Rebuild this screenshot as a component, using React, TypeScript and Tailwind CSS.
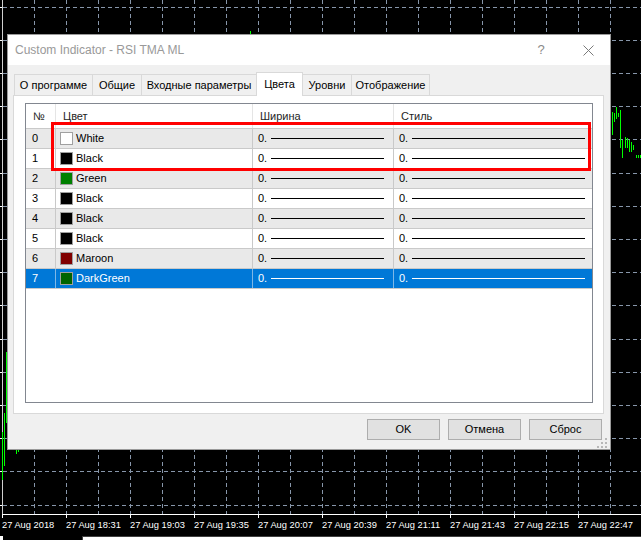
import React from 'react';

const font = "font-['Liberation_Sans',Arial,sans-serif]";

const hGrid = Array.from({ length: 16 }, (_, i) => Math.floor(7 + i * 33.2) + 0.5);
const vGrid = Array.from({ length: 19 }, (_, i) => 34.5 + i * 32);

const timeLabels = [
  '27 Aug 2018',
  '27 Aug 18:31',
  '27 Aug 19:03',
  '27 Aug 19:35',
  '27 Aug 20:07',
  '27 Aug 20:39',
  '27 Aug 21:11',
  '27 Aug 21:43',
  '27 Aug 22:15',
  '27 Aug 22:47',
];

// [x, yTop, yBottom]
const bars: [number, number, number][] = [
  [2.5, 432, 480],
  [4.5, 413, 466],
  [6.5, 352, 423],
  [16.5, 449, 454],
  [18.5, 448, 452],
  [250.5, 31, 34],
  [612.5, 112, 135],
  [614.5, 113, 122],
  [616.5, 107, 119],
  [618.5, 113, 117],
  [620.5, 110, 148],
  [622.5, 140, 158],
  [625.5, 137, 148],
  [627.5, 138, 148],
  [629.5, 140, 152],
  [631.5, 142, 152],
  [633.5, 145, 150],
  [636.5, 155, 158],
  [638.5, 155, 158],
  [640.5, 155, 158],
];

function Chart() {
  return (
    <svg width="641" height="540" className="absolute inset-0">
      {hGrid.map((y) => (
        <line key={'h' + y} x1={3} x2={641} y1={y} y2={y} stroke="#8796aa" strokeDasharray="4 3" />
      ))}
      {vGrid.map((x) => (
        <line key={'v' + x} x1={x} x2={x} y1={0} y2={514} stroke="#8796aa" strokeDasharray="4 3" />
      ))}
      {hGrid.map((y) => (
        <line key={'t' + y} x1={0} x2={3} y1={y} y2={y} stroke="#ffffff" />
      ))}
      <line x1={2.5} x2={2.5} y1={0} y2={515} stroke="#d0d0d0" />
      <line x1={2} x2={641} y1={514.5} y2={514.5} stroke="#ffffff" />
      {timeLabels.map((t, i) => (
        <g key={t}>
          <line x1={2.5 + i * 64} x2={2.5 + i * 64} y1={514} y2={518} stroke="#ffffff" />
          <text
            x={2 + i * 64}
            y={527.5}
            fill="#ffffff"
            fontSize="9.3"
            fontFamily="'Liberation Sans', Arial, sans-serif"
          >
            {t}
          </text>
        </g>
      ))}
      {bars.map(([x, a, b]) => (
        <line key={x} x1={x} x2={x} y1={a} y2={b} stroke="#00ff00" />
      ))}
      <rect x={0} y={536} width={3} height={4} fill="#ffffff" />
      <rect x={82.5} y={536.5} width={560} height={5} fill="#ffffff" stroke="#404040" />
    </svg>
  );
}

type Row = { n: number; name: string; color: string };

const rows: Row[] = [
  { n: 0, name: 'White', color: '#ffffff' },
  { n: 1, name: 'Black', color: '#000000' },
  { n: 2, name: 'Green', color: '#008000' },
  { n: 3, name: 'Black', color: '#000000' },
  { n: 4, name: 'Black', color: '#000000' },
  { n: 5, name: 'Black', color: '#000000' },
  { n: 6, name: 'Maroon', color: '#800000' },
  { n: 7, name: 'DarkGreen', color: '#006400' },
];

function ColorRow({ row, selected }: { row: Row; selected: boolean }) {
  const bg = selected ? 'bg-[#0078d7] text-white' : row.n % 2 === 0 ? 'bg-[#e9e9e9] text-black' : 'bg-white text-black';
  const sep = selected ? 'border-[#7fb7e6]' : 'border-[#c9c9c9]';
  const line = selected ? 'bg-white' : 'bg-black';
  return (
    <div className={`flex h-[20px] border-b border-[#c9c9c9] ${bg}`}>
      <div className={`w-[30px] border-r ${sep} pl-[6px] flex items-center`}>{row.n}</div>
      <div className={`w-[197px] border-r ${sep} pl-[4px] flex items-center`}>
        <span
          className="w-[13px] h-[13px] border border-[#a0a0a0] shrink-0"
          style={{ backgroundColor: row.color }}
        />
        <span className="ml-[3px]">{row.name}</span>
      </div>
      <div className={`w-[141px] border-r ${sep} pl-[5px] pr-[9px] flex items-center`}>
        <span>0.</span>
        <span className={`ml-[4px] flex-1 h-px ${line}`} />
      </div>
      <div className="flex-1 pl-[5px] pr-[7px] flex items-center">
        <span>0.</span>
        <span className={`ml-[4px] flex-1 h-px ${line}`} />
      </div>
    </div>
  );
}

function Tabs() {
  const base = 'h-[21px] mb-px border-t border-[#d9d9d9] flex items-center justify-center';
  return (
    <div className="flex items-end h-[24px] mt-[7px] -mb-px pl-[6px] relative z-10">
      <div className={`w-[78px] border-l ${base}`}>О программе</div>
      <div className={`w-[49px] border-l ${base}`}>Общие</div>
      <div className={`w-[115px] border-l ${base}`}>Входные параметры</div>
      <div className="w-[47px] h-[24px] bg-white border-t border-x border-[#d9d9d9] flex items-center justify-center">
        Цвета
      </div>
      <div className={`w-[48px] ${base}`}>Уровни</div>
      <div className={`w-[79px] border-x ${base}`}>Отображение</div>
    </div>
  );
}

function Dialog() {
  return (
    <div className="absolute left-[7px] top-[34px] w-[604px] h-[416px] border border-[#9a9a9a] bg-[#f0f0f0] flex flex-col text-[11px]">
      <div className="h-[30px] bg-white flex items-center shrink-0">
        <span className="pl-[7px] text-[12px] text-[#999999]">Custom Indicator - RSI TMA ML</span>
        <span className="ml-auto w-[50px] text-center text-[13px] text-[#8a8a8a]">?</span>
        <span className="w-[44px] flex justify-center">
          <svg width="11" height="11" viewBox="0 0 11 11">
            <path d="M0.5 0.5 L10.5 10.5 M10.5 0.5 L0.5 10.5" stroke="#7a7a7a" strokeWidth="1" />
          </svg>
        </span>
      </div>

      <Tabs />

      <div className="ml-[5px] w-[591px] h-[319px] bg-white border border-[#d9d9d9] shrink-0">
        <div className="ml-[11px] mt-[7px] w-[568px] h-[300px] border border-[#828790] bg-white flex flex-col">
          <div className="flex h-[25px] border-b border-[#c9c9c9] bg-white text-[#1e1e1e]">
            <div className="w-[30px] border-r border-[#e5e5e5] pl-[7px] flex items-center">№</div>
            <div className="w-[197px] border-r border-[#e5e5e5] pl-[7px] flex items-center">Цвет</div>
            <div className="w-[141px] border-r border-[#e5e5e5] pl-[7px] flex items-center">Ширина</div>
            <div className="flex-1 pl-[7px] flex items-center">Стиль</div>
          </div>
          {rows.map((r) => (
            <ColorRow key={r.n} row={r} selected={r.n === 7} />
          ))}
        </div>
      </div>

      <div className="flex justify-end gap-[8px] pr-[8px] mt-[5px]">
        {['OK', 'Отмена', 'Сброс'].map((b) => (
          <button
            key={b}
            className="w-[73px] h-[21px] bg-[#e1e1e1] border border-[#adadad] text-black flex items-center justify-center"
          >
            {b}
          </button>
        ))}
      </div>

      <svg width="11" height="10" className="absolute right-[2px] bottom-[1px]">
        {[
          [8, 0],
          [4, 4],
          [8, 4],
          [0, 8],
          [4, 8],
          [8, 8],
        ].map(([x, y]) => (
          <rect key={`${x}-${y}`} x={x} y={y} width={2} height={2} fill="#b8b8b8" />
        ))}
      </svg>
    </div>
  );
}

export default function App() {
  return (
    <div className={`relative w-[641px] h-[540px] bg-black overflow-hidden ${font}`}>
      <Chart />
      <Dialog />
      <div className="absolute left-[51px] top-[122px] w-[540px] h-[49px] border-[3px] border-[#ff0000]" />
    </div>
  );
}
